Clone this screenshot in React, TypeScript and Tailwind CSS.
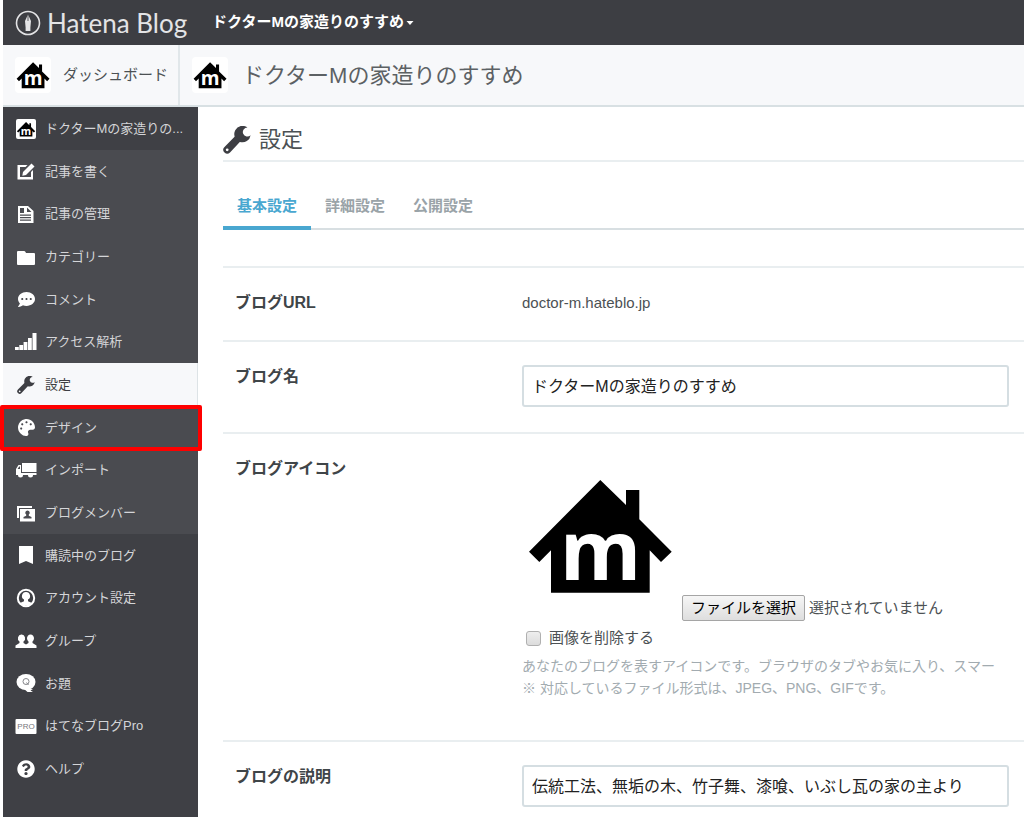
import type { ReactNode } from "react"
import { FaCommentDots, FaPalette, FaQuestionCircle } from "react-icons/fa"

interface MenuItem {
    label: string
    icon: ReactNode
    active?: boolean
    marked?: boolean
}

function HouseIcon({ className }: { className: string }) {
    return (
        <svg viewBox="0 0 156 156" className={className} aria-hidden="true">
            <path
                d="M78.3 23 104 48V33h13.3v29.3l32.4 32.4L139 105l-11.3-11.7v42.4H29V93.3L17.3 105 7 94.7z"
                fill="#000"
            />
            <text x="78.5" y="123" textAnchor="middle" fontSize="83" fontWeight="700" fontFamily="Open Sans, sans-serif" fill="#fff">
                m
            </text>
        </svg>
    )
}

function WrenchIcon({ className }: { className: string }) {
    return (
        <svg viewBox="0 0 28 28" className={className} fill="currentColor" aria-hidden="true">
            <path d="M24.500 1.600A8.200 8.200 0 1 0 27.600 9.200A4.500 4.500 0 1 1 24.500 1.600z" />
            <path
                fillRule="evenodd"
                d="m12.300 10 5.200 5.200L7 26.500a3.800 3.800 0 0 1-5.500-5.500zM4.200 22.400a1.400 1.400 0 1 0 0 2.800 1.400 1.400 0 0 0 0-2.800z"
            />
        </svg>
    )
}

function Glyph({ children }: { children: ReactNode }) {
    return (
        <svg viewBox="0 0 22 20" className="h-5 w-[22px]" fill="currentColor" aria-hidden="true">
            {children}
        </svg>
    )
}

const blogMenu: MenuItem[] = [
    {
        label: "記事を書く",
        icon: (
            <Glyph>
                <path d="M2.500 4h10l-2 2H5v10h11v-5l2-2v9.500H2.500z" />
                <path d="m8 11 8.500-8.500 3 3L11 14l-3.700.8z" />
            </Glyph>
        ),
    },
    {
        label: "記事の管理",
        icon: (
            <Glyph>
                <path
                    fillRule="evenodd"
                    d="M3 2h10l5.500 5v12H3zM5 4v5h4V4zM12 3.500V8h4.500zM5 10.500v1.200h11v-1.200zM5 13v1.200h11V13zM5 15.500v1.200h11v-1.200z"
                />
            </Glyph>
        ),
    },
    {
        label: "カテゴリー",
        icon: (
            <Glyph>
                <path d="M3 4h6q1 0 1.500 1l.5 1h8q1 0 1 1v10q0 1-1 1H3q-1 0-1-1V5q0-1 1-1z" />
            </Glyph>
        ),
    },
    { label: "コメント", icon: <FaCommentDots className="size-[17px]" /> },
    {
        label: "アクセス解析",
        icon: (
            <Glyph>
                <path d="M0 15h3.800v3H0zM4.300 13h3.800v5H4.300zM8.600 10h3.800v8H8.600zM13 6h3.800v12H13zM17.500 1h4v17h-4z" />
            </Glyph>
        ),
    },
    { label: "設定", icon: <WrenchIcon className="size-[18px]" />, active: true },
    { label: "デザイン", icon: <FaPalette className="size-[17px]" />, marked: true },
    {
        label: "インポート",
        icon: (
            <Glyph>
                <path d="M7 3h14.500v9H7z" />
                <path
                    fillRule="evenodd"
                    d="M6 5H3.500L1 9v6h2a2.500 2.500 0 0 0 5 0h5a2.500 2.500 0 0 0 5 0h3.500v-2H6zM4.200 6.500H5V9H2.600z"
                />
            </Glyph>
        ),
    },
    {
        label: "ブログメンバー",
        icon: (
            <Glyph>
                <path d="M2 3h15v2H4v10H2z" />
                <path
                    fillRule="evenodd"
                    d="M5 6h15v12.500H5zM12.500 7.500a2.200 2.200 0 0 0-1.300 4v1.300L8.500 14v1.500h8V14l-2.700-1.200v-1.300a2.200 2.200 0 0 0-1.300-4z"
                />
            </Glyph>
        ),
    },
]

const userMenu: MenuItem[] = [
    {
        label: "購読中のブログ",
        icon: (
            <Glyph>
                <path d="M4 1h14v18l-7-3-7 3z" />
            </Glyph>
        ),
    },
    {
        label: "アカウント設定",
        icon: (
            <Glyph>
                <circle cx="11" cy="10" r="8.200" fill="none" stroke="currentColor" strokeWidth="2" />
                <path d="M11 4a4 4 0 0 0-2 7.500v1.700L5 15q6 5 12 0l-4-1.800v-1.700A4 4 0 0 0 11 4z" />
            </Glyph>
        ),
    },
    {
        label: "グループ",
        icon: (
            <Glyph>
                <path d="M6.500 3.500a3.500 3.800 0 0 0-2 7V12L.5 14.500V17h21v-2.500l-4-2.500v-1.500a3.500 3.800 0 1 0-4 0V12L11 13.500 8.500 12v-1.500a3.500 3.800 0 0 0-2-7z" />
            </Glyph>
        ),
    },
    {
        label: "お題",
        icon: (
            <Glyph>
                <ellipse cx="11" cy="9" rx="9.500" ry="8" />
                <path d="m8 15 4.500 4H18l-2.500-1.500L18 16z" />
                <circle cx="11" cy="8.500" r="3" fill="none" stroke="#85868a" />
                <path d="m11.500 9.500 2 2.500" stroke="#85868a" />
            </Glyph>
        ),
    },
    {
        label: "はてなブログPro",
        icon: (
            <Glyph>
                <rect x="0.500" y="3" width="21" height="15" rx="1" />
                <text x="11" y="13" textAnchor="middle" fontSize="8" fontFamily="Liberation Sans, sans-serif" fill="#77787c">
                    PRO
                </text>
            </Glyph>
        ),
    },
    { label: "ヘルプ", icon: <FaQuestionCircle className="size-[18px]" /> },
]

function MenuList({ items, className }: { items: MenuItem[]; className: string }) {
    return (
        <ul className={className}>
            {items.map((item) => (
                <li key={item.label} className="relative">
                    <a
                        href="#"
                        className={
                            item.active
                                ? "flex h-full items-center gap-2 border-r border-[#dde3e6] bg-[#f7f8fa] pl-3 text-[#3d3e43]"
                                : "flex h-full items-center gap-2 pl-3 text-[#d4d5d8]"
                        }
                    >
                        <span className={item.active ? "flex w-[22px] justify-center" : "flex w-[22px] justify-center text-white"}>
                            {item.icon}
                        </span>
                        {item.label}
                    </a>
                    {item.marked && (
                        <span className="pointer-events-none absolute -top-px -right-1 -bottom-0.5 -left-[3px] z-10 rounded-xs border-4 border-[#fe0000]" />
                    )}
                </li>
            ))}
        </ul>
    )
}

function Field({ label, htmlFor, children }: { label: string; htmlFor?: string; children: ReactNode }) {
    return (
        <div className="flex border-t-2 border-[#e9eef0] px-3 pt-[23px] pb-[25px]">
            <div className="w-[287px] shrink-0 text-base leading-6 font-bold text-[#3f4548]">
                {htmlFor ? <label htmlFor={htmlFor}>{label}</label> : label}
            </div>
            <div className="min-w-0 flex-1">{children}</div>
        </div>
    )
}

export default function App() {
    return (
        <div className="flex min-h-screen flex-col overflow-hidden bg-white pl-[3px] font-['Liberation_Sans','Noto_Sans_CJK_JP',sans-serif] text-[15px] text-[#4c5154]">
            <header className="flex h-[45px] items-center bg-[#3d3e43] pl-3 text-white">
                <a href="#" className="flex w-[197px] items-center gap-1.5 font-['Lato',sans-serif] text-[26px] leading-8 whitespace-nowrap text-[#e4e4e6]">
                    <svg viewBox="0 0 26 26" className="size-[26px] shrink-0" aria-hidden="true">
                        <circle cx="13" cy="13" r="11.500" fill="none" stroke="currentColor" strokeWidth="1.600" />
                        <path d="m13 4.500-3 6.500.6 6.500v3.500h4.800v-3.500l.6-6.500z" fill="currentColor" />
                        <path d="M13 4.500V11" stroke="#3d3e43" strokeWidth="0.800" />
                    </svg>
                    Hatena Blog
                </a>
                <button type="button" className="flex items-center gap-0.5 font-bold">
                    ドクターMの家造りのすすめ
                    <svg viewBox="0 0 8 6" className="h-1.5 w-2" aria-hidden="true">
                        <path d="M0.500 1h7L4 5z" fill="currentColor" />
                    </svg>
                </button>
            </header>

            <div className="flex h-[62px] border-b-2 border-[#d8e0e3] bg-[#f7f8fa]">
                <a href="#" className="flex w-[177px] items-center gap-3 border-r-2 border-[#e1e7ea] pl-3">
                    <HouseIcon className="size-9 rounded-sm bg-white" />
                    ダッシュボード
                </a>
                <h1 className="flex items-center gap-3.5 pl-3 text-[22px] text-[#5c6164]">
                    <HouseIcon className="size-9 rounded-sm bg-white" />
                    ドクターMの家造りのすすめ
                </h1>
            </div>

            <div className="flex flex-1">
                <nav className="w-[195px] shrink-0 bg-[#3f4045] text-[13px]">
                    <a href="#" className="flex h-[43px] items-center gap-2 pl-3 text-[#d4d5d8]">
                        <span className="flex w-[22px] justify-center">
                            <HouseIcon className="size-5 rounded-xs bg-white" />
                        </span>
                        ドクターMの家造りの...
                    </a>
                    <MenuList items={blogMenu} className="grid h-96 auto-rows-fr bg-[#4a4b50]" />
                    <MenuList items={userMenu} className="grid h-64 auto-rows-fr" />
                </nav>

                <main className="min-w-0 flex-1 pl-[25px]">
                    <h2 className="flex h-[55px] items-center gap-2 border-b-2 border-[#e9eef0] pt-3 text-[22px]">
                        <WrenchIcon className="size-7 text-[#3d3e43]" />
                        設定
                    </h2>
                    <div className="mt-5 flex h-12 border-b-2 border-[#d8dfe2] font-bold text-[#9aa3a8]">
                        <a href="#" className="h-12 border-b-4 border-[#49a7d0] px-3.5 leading-[48px] text-[#49a7d0]">基本設定</a>
                        <a href="#" className="px-3.5 leading-[48px]">詳細設定</a>
                        <a href="#" className="px-3.5 leading-[48px]">公開設定</a>
                    </div>

                    <form className="mt-9">
                        <Field label="ブログURL">
                            <p className="leading-6">doctor-m.hateblo.jp</p>
                        </Field>
                        <Field label="ブログ名" htmlFor="blog-name">
                            <div className="pr-[3px]">
                                <input
                                    id="blog-name"
                                    type="text"
                                    defaultValue="ドクターMの家造りのすすめ"
                                    className="block h-[42px] w-full rounded-[3px] border-2 border-[#d5dee2] px-2 pb-0.5 text-base text-[#222]"
                                />
                            </div>
                        </Field>
                        <Field label="ブログアイコン">
                            <div className="flex items-baseline gap-1 whitespace-nowrap">
                                <HouseIcon className="size-[156px] shrink-0" />
                                <button
                                    type="button"
                                    className="h-[26px] rounded-xs border border-[#a5a5a5] bg-linear-to-b from-[#f6f6f6] to-[#dedede] px-2 leading-6 text-black"
                                >
                                    ファイルを選択
                                </button>
                                <span>選択されていません</span>
                            </div>
                            <label className="flex h-[34px] items-center gap-2 pl-1">
                                <input
                                    type="checkbox"
                                    className="size-[15px] appearance-none rounded-[3px] border border-[#b0b0b0] bg-linear-to-b from-[#eeeeee] to-[#dcdcdc]"
                                />
                                画像を削除する
                            </label>
                            <p className="mb-4 text-sm leading-[22px] whitespace-nowrap text-[#a2abb0]">
                                あなたのブログを表すアイコンです。ブラウザのタブやお気に入り、スマー
                                <br />
                                ※ 対応しているファイル形式は、JPEG、PNG、GIFです。
                            </p>
                        </Field>
                        <Field label="ブログの説明" htmlFor="blog-description">
                            <div className="pr-[3px]">
                                <input
                                    id="blog-description"
                                    type="text"
                                    defaultValue="伝統工法、無垢の木、竹子舞、漆喰、いぶし瓦の家の主より"
                                    className="block h-[42px] w-full rounded-[3px] border-2 border-[#d5dee2] px-2 pb-0.5 text-base text-[#222]"
                                />
                            </div>
                        </Field>
                    </form>
                </main>
            </div>
        </div>
    )
}
